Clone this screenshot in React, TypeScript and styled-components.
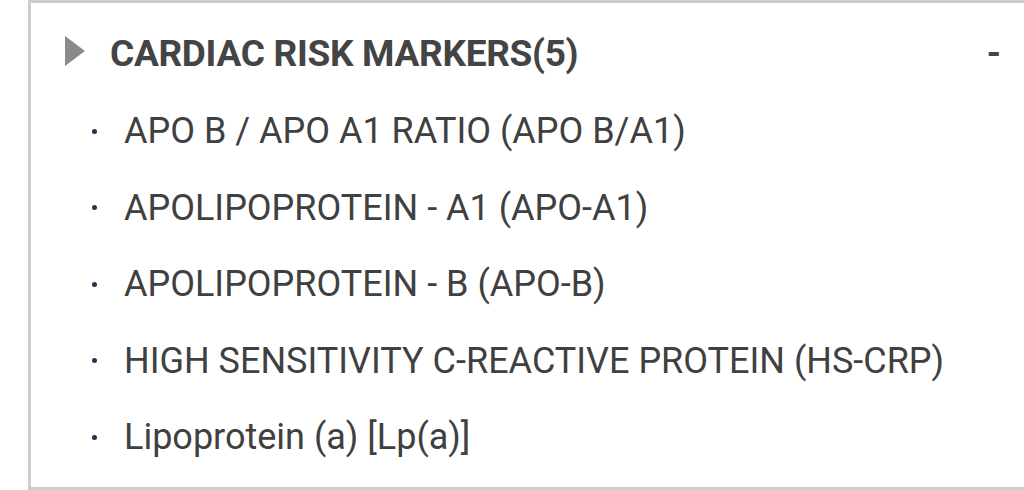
import React from 'react';
import styled, { createGlobalStyle } from 'styled-components';

const GlobalStyle = createGlobalStyle`
  html, body {
    margin: 0;
    padding: 0;
    background: #ffffff;
    overflow: hidden;
  }
  body {
    font-family: Roboto, 'Liberation Sans', sans-serif;
  }
`;

const TESTS = [
  'APO B / APO A1 RATIO (APO B/A1)',
  'APOLIPOPROTEIN - A1 (APO-A1)',
  'APOLIPOPROTEIN - B (APO-B)',
  'HIGH SENSITIVITY C-REACTIVE PROTEIN (HS-CRP)',
  'Lipoprotein (a) [Lp(a)]',
];

export default function App() {
  return (
    <>
      <GlobalStyle />
      <Card>
        <Header>
          <Caret />
          <Title>CARDIAC RISK MARKERS({TESTS.length})</Title>
          <Toggle>-</Toggle>
        </Header>
        <List>
          {TESTS.map((name) => (
            <Item key={name}>
              <Dot />
              <Name>{name}</Name>
            </Item>
          ))}
        </List>
      </Card>
    </>
  );
}

const Card = styled.div`
  box-sizing: border-box;
  width: 1040px;
  height: 490px;
  margin-left: 28px;
  border: 3px solid #cdcdcd;
  background: #fff;
`;

const Header = styled.div`
  display: flex;
  align-items: center;
  height: 80px;
  margin-top: 10px;
  padding: 0 64px 0 34px;
`;

const Caret = styled.span`
  width: 0;
  height: 0;
  border-top: 15px solid transparent;
  border-bottom: 15px solid transparent;
  border-left: 20px solid #8a8a8a;
  margin-right: 25px;
  margin-top: -4px;
`;

const Title = styled.span`
  font-size: 37px;
  font-weight: 700;
  color: #444;
  letter-spacing: -0.3px;
`;

const Toggle = styled.span`
  margin-left: auto;
  font-size: 36px;
  font-weight: 700;
  color: #444;
`;

const List = styled.ul`
  list-style: none;
  margin: 0;
  padding: 0 0 0 61px;
`;

const Item = styled.li`
  display: flex;
  align-items: center;
  height: 76.5px;
`;

const Dot = styled.span`
  width: 5px;
  height: 5px;
  border-radius: 50%;
  background: #2e2f4f;
  margin-right: 27px;
`;

const Name = styled.span`
  font-size: 36px;
  color: #404040;
`;
